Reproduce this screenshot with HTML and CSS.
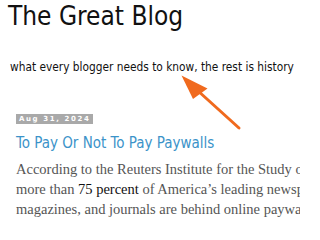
FILE: index.html
```html
<!DOCTYPE html>
<html>
<head>
<meta charset="utf-8">
<link rel="stylesheet" href="styles.css">
</head>
<body>
<div class="page">
  <header class="blog-header">
    <h1 class="blog-title">The Great Blog</h1>
    <p class="blog-desc">what every blogger needs to know, the rest is history</p>
  </header>
  <main class="content">
    <div class="date-header"><span>Aug 31, 2024</span></div>
    <h2 class="post-title">To Pay Or Not To Pay Paywalls</h2>
    <div class="post-body">
      <p class="line">According to the Reuters Institute for the Study of Journalism,</p>
      <p class="line">more than <b class="em">75 percent</b> of America’s leading newspapers,</p>
      <p class="line">magazines, and journals are behind online paywalls.</p>
    </div>
  </main>
  <svg class="arrow" width="300" height="220" viewBox="0 0 300 220">
    <line x1="239" y1="128" x2="197" y2="90" stroke="#f06a1e" stroke-width="3" stroke-linecap="round"/>
    <polygon points="181.5,75.5 207.5,88.5 193,99" fill="#f06a1e"/>
  </svg>
</div>
</body>
</html>
```
FILE: styles.css
```css
html, body {
  margin: 0;
  padding: 0;
  background: #ffffff;
  overflow: hidden;
}
.page {
  position: relative;
  width: 300px;
  height: 220px;
  overflow: hidden;
}
.blog-header {
  padding: 0 0 0 8px;
}
.blog-title {
  margin: 0;
  padding-top: 1px;
  font-family: "DejaVu Sans Condensed", "DejaVu Sans", sans-serif;
  font-weight: normal;
  font-size: 26px;
  line-height: 30px;
  color: #111;
  white-space: nowrap;
}
.blog-desc {
  margin: 28px 0 0 2px;
  font-family: "DejaVu Sans Condensed", "DejaVu Sans", sans-serif;
  font-size: 11.8px;
  line-height: 16px;
  color: #111;
  white-space: nowrap;
}
.content {
  padding: 32px 0 0 16px;
}
.date-header span {
  display: inline-block;
  background: #a9a9a9;
  color: #fff;
  font-family: "DejaVu Sans", sans-serif;
  font-weight: bold;
  font-size: 7px;
  letter-spacing: 1.6px;
  line-height: 10px;
  padding: 0 3px;
}
.post-title {
  margin: 8px 0 0 0;
  font-family: "DejaVu Sans Condensed", "DejaVu Sans", sans-serif;
  font-weight: normal;
  font-size: 15px;
  line-height: 20px;
  color: #3b93c9;
  white-space: nowrap;
}
.post-body {
  margin-top: 6px;
  font-family: "Liberation Serif", serif;
  font-size: 14.5px;
  line-height: 20px;
  color: #555;
  white-space: nowrap;
}
.line {
  margin: 0;
}
.em {
  color: #111;
  font-weight: normal;
}
.arrow {
  position: absolute;
  left: 0;
  top: 0;
}
```
